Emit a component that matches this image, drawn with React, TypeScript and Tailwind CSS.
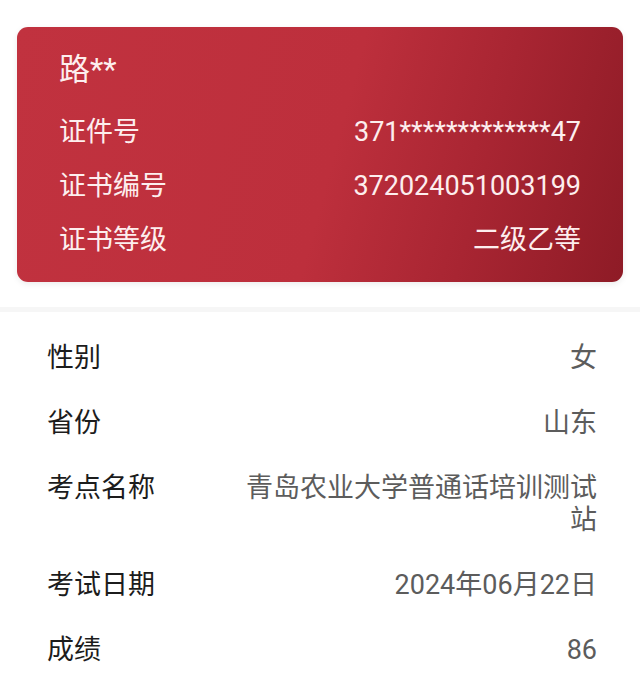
const cardRows = [
  { label: "证件号", value: "371*************47" },
  { label: "证书编号", value: "372024051003199" },
  { label: "证书等级", value: "二级乙等" },
];

const infoRows = [
  { label: "性别", value: "女" },
  { label: "省份", value: "山东" },
  { label: "考点名称", value: "青岛农业大学普通话培训测试站" },
  { label: "考试日期", value: "2024年06月22日" },
  { label: "成绩", value: "86" },
];

export default function App() {
  return (
    <div className="min-h-[695px] bg-white font-['Roboto','Noto_Sans_CJK_SC',sans-serif]">
      <div className="px-[17px] pt-[27px] pb-[25px]">
        <section className="rounded-[11px] bg-[linear-gradient(105deg,#c1323f_0%,#bd2f3c_52%,#a82532_75%,#8e1b26_100%)] px-[42px] pt-[23px] pb-[15px] text-[#fdeeee] shadow-[0_2px_6px_rgba(0,0,0,0.08)]">
          <h1 className="h-[40px] text-[31px] leading-[40px]">路**</h1>
          <div className="mt-[15px]">
            {cardRows.map((row) => (
              <div key={row.label} className="flex h-[54px] items-center justify-between text-[27px]">
                <span>{row.label}</span>
                <span>{row.value}</span>
              </div>
            ))}
          </div>
        </section>
      </div>

      <div className="h-[5px] bg-[#f6f6f6]" />

      <main className="pt-[13px] pr-[43px] pl-[47px]">
        {infoRows.map((row) => (
          <div key={row.label} className="flex items-start justify-between py-[16.5px] text-[27px] leading-[32px]">
            <span className="shrink-0 text-[#1c1c1c]">{row.label}</span>
            <span className="w-[360px] text-right text-[#5c5c5c]">{row.value}</span>
          </div>
        ))}
      </main>
    </div>
  );
}
